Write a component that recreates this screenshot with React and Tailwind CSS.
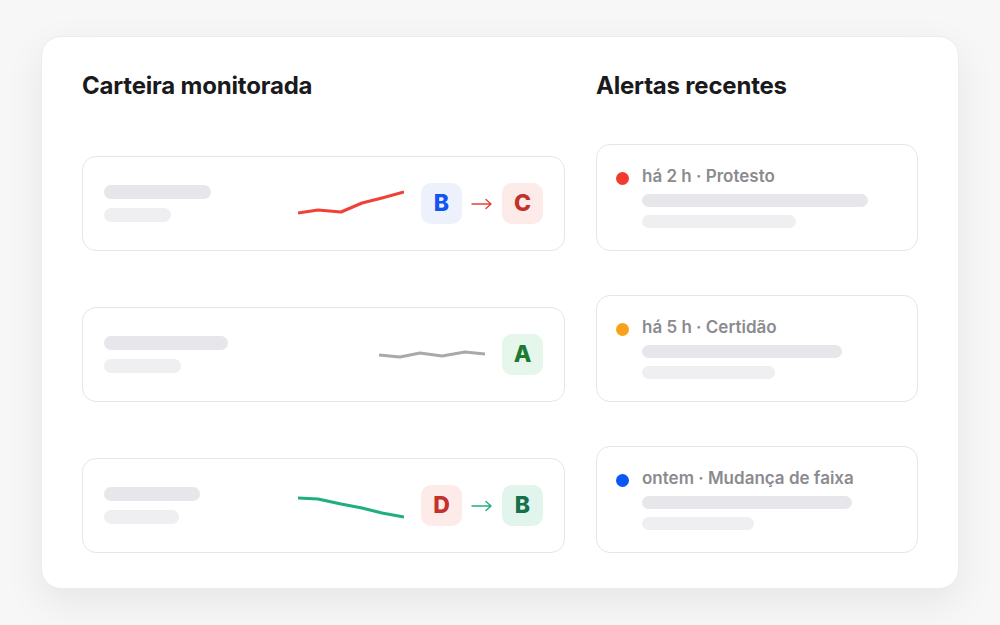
import React from 'react';

const portfolio = [
  {
    bars: ['w-[107px]', 'w-[67px]'],
    line: { color: '#ef4136', points: '0,24 20,21 43,23 64,14 84,9 106,3' },
    from: { letter: 'B', tone: 'blue' },
    to: { letter: 'C', tone: 'red' },
    arrow: '#e0453a',
  },
  {
    bars: ['w-[124px]', 'w-[77px]'],
    line: { color: '#a9a9ad', points: '0,15 21,17 41,13 63,16 86,12 106,14' },
    to: { letter: 'A', tone: 'green' },
  },
  {
    bars: ['w-[96px]', 'w-[75px]'],
    line: { color: '#1fae7f', points: '0,7 20,8 43,13 64,17 84,22 106,26' },
    from: { letter: 'D', tone: 'red' },
    to: { letter: 'B', tone: 'mint' },
    arrow: '#1fae7f',
  },
];

const alerts = [
  { dot: 'bg-[#f23a2f]', label: 'há 2 h · Protesto', bars: ['w-[226px]', 'w-[154px]'] },
  { dot: 'bg-[#f8a21a]', label: 'há 5 h · Certidão', bars: ['w-[200px]', 'w-[133px]'] },
  { dot: 'bg-[#0b57f5]', label: 'ontem · Mudança de faixa', bars: ['w-[210px]', 'w-[112px]'] },
];

const tones = {
  blue: 'bg-[#edf1fc] text-[#1454f0]',
  red: 'bg-[#fdebe9] text-[#c3312b]',
  green: 'bg-[#e5f6ea] text-[#1d7a33]',
  mint: 'bg-[#e2f5ec] text-[#16704b]',
};

function Grade({ letter, tone }) {
  return (
    <div className={`w-[41px] h-[41px] rounded-[10px] flex items-center justify-center text-[23px] font-extrabold ${tones[tone]}`}>
      {letter}
    </div>
  );
}

function Arrow({ color }) {
  return (
    <svg width="22" height="12" viewBox="0 0 22 12" fill="none" stroke={color} strokeWidth="1.4" strokeLinecap="round" strokeLinejoin="round">
      <path d="M1 6h19M15 1.5L20 6l-5 4.5" />
    </svg>
  );
}

function PortfolioCard({ item }) {
  return (
    <div className="self-end h-[95px] rounded-[14px] border border-[#e6e6e8] bg-white flex items-center pl-[21px] pr-[21px]">
      <div className="flex flex-col gap-[9px]">
        <div className={`h-[14px] rounded-full bg-[#e7e7eb] ${item.bars[0]}`} />
        <div className={`h-[14px] rounded-full bg-[#efeff2] ${item.bars[1]}`} />
      </div>
      <div className="flex-1" />
      <svg width="106" height="30" viewBox="0 0 106 30" fill="none" className="mr-[17px]">
        <polyline points={item.line.points} stroke={item.line.color} strokeWidth="3" strokeLinejoin="round" />
      </svg>
      {item.from && (
        <>
          <Grade {...item.from} />
          <div className="w-[40px] flex justify-center">
            <Arrow color={item.arrow} />
          </div>
        </>
      )}
      <Grade {...item.to} />
    </div>
  );
}

function AlertCard({ alert }) {
  return (
    <div className="h-[107px] rounded-[14px] border border-[#e6e6e8] bg-white flex pl-[19px] pt-[21px]">
      <div className={`w-[13px] h-[13px] rounded-full mt-[6px] mr-[13px] ${alert.dot}`} />
      <div className="flex flex-col">
        <div className="text-[17px] leading-[21px] font-semibold text-[#8b8b8f]">{alert.label}</div>
        <div className={`mt-[7px] h-[13px] rounded-full bg-[#e7e7eb] ${alert.bars[0]}`} />
        <div className={`mt-[8px] h-[13px] rounded-full bg-[#efeff2] ${alert.bars[1]}`} />
      </div>
    </div>
  );
}

export default function App() {
  return (
    <div className="w-[1000px] h-[625px] bg-[#f7f7f8] pt-[36px] pl-[41px]" style={{ fontFamily: 'Inter, "Noto Sans", sans-serif' }}>
      <div className="w-[918px] h-[553px] rounded-[20px] bg-white border border-[#ececee] shadow-[0_14px_40px_rgba(0,0,0,0.07)] px-[40px] pt-[35px]">
        <div className="grid grid-cols-[483px_322px] gap-x-[31px] grid-rows-[28px_107px_107px_107px] gap-y-[44px]">
          <h2 className="text-[24px] leading-[27px] font-bold text-[#1a1a1c] tracking-[-0.2px]">Carteira monitorada</h2>
          <h2 className="text-[24px] leading-[27px] font-bold text-[#1a1a1c] tracking-[-0.2px]">Alertas recentes</h2>
          {portfolio.map((item, i) => (
            <React.Fragment key={i}>
              <PortfolioCard item={item} />
              <AlertCard alert={alerts[i]} />
            </React.Fragment>
          ))}
        </div>
      </div>
    </div>
  );
}
